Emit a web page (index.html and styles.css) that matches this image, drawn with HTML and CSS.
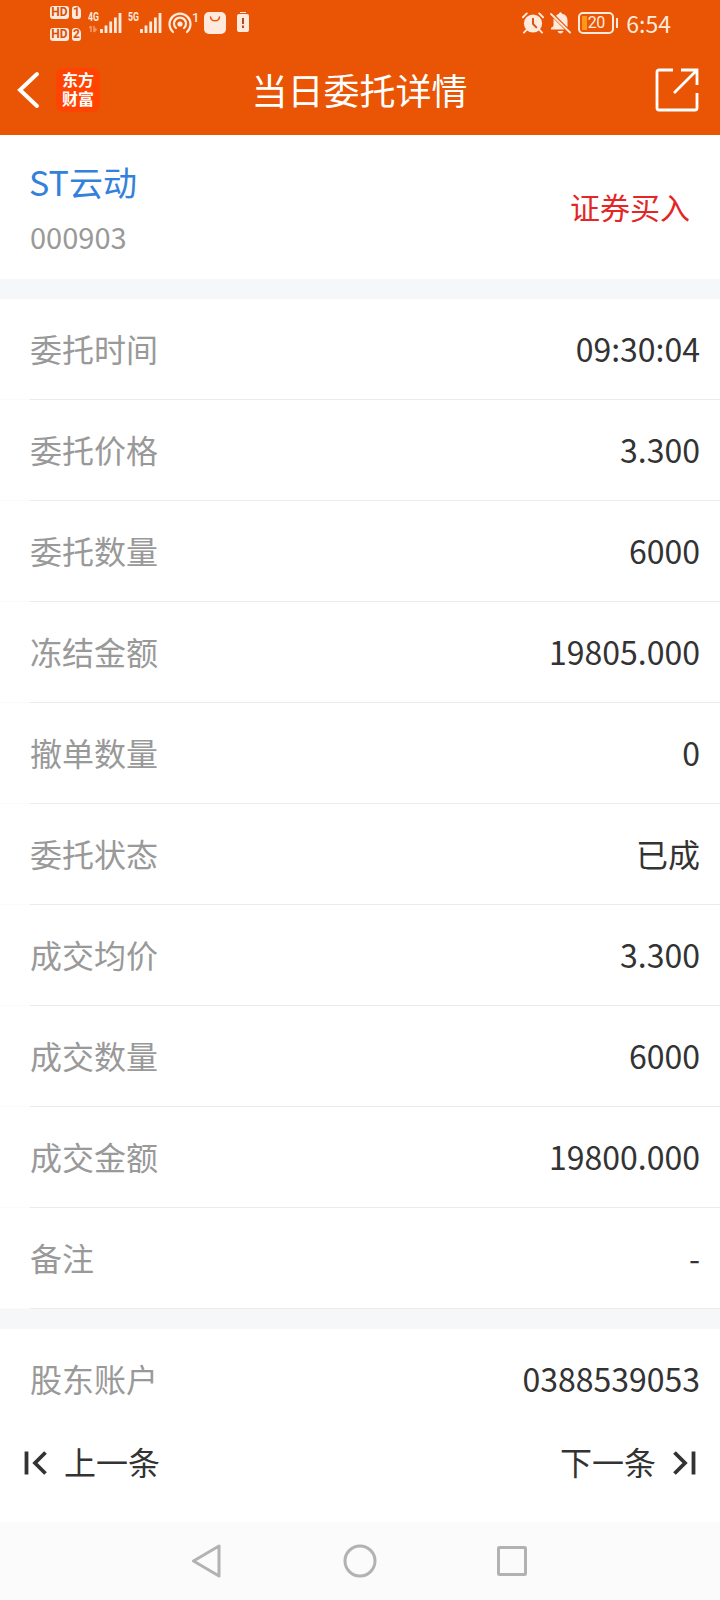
FILE: index.html
```html
<!DOCTYPE html>
<html lang="zh-CN">

<head>
	<meta charset="UTF-8">
	<meta name="viewport" content="width=device-width, initial-scale=1.0">

	<title>当日委托详情</title>

	<link rel="stylesheet" href="styles.css">
</head>

<body>
	<div class="status-bar">
		<div class="status-left">
			<div class="sims">
				<div class="sim"><span class="hd">HD</span><span class="num">1</span></div>
				<div class="sim"><span class="hd">HD</span><span class="num">2</span></div>
			</div>
			<div class="signal">
				<span class="net">4G</span>
				<svg width="34" height="22" viewBox="0 0 34 22">
					<path d="M3 14v6M1.500 16l1.500-2M6 14v6M6 20l2.500-2.500M6 17h2.500" stroke="#f79a68" stroke-width="1.500" fill="none" />
					<path d="M13.500 17v4M18 13.500v7.500M22.700 9.500v11.500M27.400 5.500v15.500M32 1v20" stroke="#ffeadd" stroke-width="2.800" />
				</svg>
			</div>
			<div class="signal">
				<span class="net">5G</span>
				<svg width="34" height="22" viewBox="0 0 34 22">
					<path d="M13.500 17v4M18 13.500v7.500M22.700 9.500v11.500M27.400 5.500v15.500M32 1v20" stroke="#ffeadd" stroke-width="2.800" />
				</svg>
			</div>
			<div class="hotspot">
				<svg width="24" height="22" viewBox="0 0 24 22">
					<g fill="none" stroke="#ffeadd" stroke-width="2.200" stroke-linecap="round">
						<path d="M5 20a10.500 10.500 0 1 1 14 0" />
						<path d="M8 16a6 6 0 1 1 8 0" />
					</g>
					<circle cx="12" cy="12" r="2.600" fill="#ffeadd" />
				</svg>
				<span class="count">1</span>
			</div>
			<svg class="bag" width="22" height="22" viewBox="0 0 22 22">
				<rect width="22" height="22" rx="5" fill="#ffeadd" />
				<path d="M6.500 5c.5 5 8.500 5 9 0" fill="none" stroke="#e95504" stroke-width="1.500" stroke-linecap="round" />
			</svg>
			<svg class="low" width="12" height="21" viewBox="0 0 12 21">
				<path d="M3 0h6v1h-6zM2 2h8a2 2 0 0 1 2 2v14a2 2 0 0 1-2 2h-8a2 2 0 0 1-2-2v-14a2 2 0 0 1 2-2z" fill="#ffeadd" />
				<path d="M6 6v6M6 13.500v2.500" stroke="#b64a10" stroke-width="2" />
			</svg>
		</div>
		<div class="status-right">
			<svg width="22" height="22" viewBox="0 0 23 22">
				<circle cx="11.500" cy="11.500" r="9.500" fill="#ffeadd" />
				<path d="M1 5l4-4M22 5l-4-4M5 18l-3 3M18 18l3 3" stroke="#ffeadd" stroke-width="2" stroke-linecap="round" />
				<path d="M11.500 6.500v5.500l3.500 3.500" fill="none" stroke="#d85008" stroke-width="2" stroke-linecap="round" />
			</svg>
			<svg class="mute" width="21" height="22" viewBox="0 0 21 22">
				<path d="M6 3.700q1.400-1.500 3-2a1.500 1.500 0 0 1 3 0q5.500 1 5.500 7v6.500zM3.500 6.500l11 11h-13.500v-1.500l2.500-2zM7.500 19h6q-1 2.500-3 2.500t-3-2.500z" fill="#ffeadd" />
				<path d="M1 2l19 18.500" stroke="#ffeadd" stroke-width="1.800" stroke-linecap="round" />
			</svg>
			<div class="battery"><span>20</span></div>
			<time class="clock">6:54</time>
		</div>
	</div>

	<header class="header">
		<div class="header-left">
			<svg width="24" height="38" viewBox="0 0 24 38">
				<path d="M20 3L3 19l17 16" fill="none" stroke="#fff" stroke-width="4" stroke-linecap="round" />
			</svg>
			<div class="logo">东方<br>财富</div>
		</div>
		<h1>当日委托详情</h1>
		<svg class="share" width="44" height="44" viewBox="0 0 44 44">
			<path d="M18 2H4a2 2 0 0 0-2 2v36a2 2 0 0 0 2 2h36a2 2 0 0 0 2-2V25M26 2h16v15M41 3L19 25" fill="none" stroke="#fff" stroke-width="2.800" />
		</svg>
	</header>

	<section class="stock">
		<div class="stock-info">
			<h2>ST云动</h2>
			<div class="code">000903</div>
		</div>
		<div class="action">证券买入</div>
	</section>

	<dl class="details">
		<div class="row"><dt>委托时间</dt><dd>09:30:04</dd></div>
		<div class="row"><dt>委托价格</dt><dd>3.300</dd></div>
		<div class="row"><dt>委托数量</dt><dd>6000</dd></div>
		<div class="row"><dt>冻结金额</dt><dd>19805.000</dd></div>
		<div class="row"><dt>撤单数量</dt><dd>0</dd></div>
		<div class="row"><dt>委托状态</dt><dd>已成</dd></div>
		<div class="row"><dt>成交均价</dt><dd>3.300</dd></div>
		<div class="row"><dt>成交数量</dt><dd>6000</dd></div>
		<div class="row"><dt>成交金额</dt><dd>19800.000</dd></div>
		<div class="row"><dt>备注</dt><dd>-</dd></div>
	</dl>

	<dl class="details account">
		<div class="row"><dt>股东账户</dt><dd>0388539053</dd></div>
	</dl>

	<div class="pager">
		<a class="page-link">
			<svg width="24" height="24" viewBox="0 0 24 24">
				<path d="M2.500 .5v23M21.500 1.500L11 12l10.500 10.500" fill="none" stroke="#333" stroke-width="3.800" />
			</svg>
			<span>上一条</span>
		</a>
		<a class="page-link">
			<span>下一条</span>
			<svg width="24" height="24" viewBox="0 0 24 24">
				<path d="M21.500 .5v23M2.500 1.500L13 12 2.500 22.500" fill="none" stroke="#333" stroke-width="3.800" />
			</svg>
		</a>
	</div>

	<nav class="nav-bar">
		<svg width="34" height="34" viewBox="0 0 34 34">
			<path d="M28 2v30L2.500 17z" />
		</svg>
		<svg width="34" height="34" viewBox="0 0 34 34">
			<circle cx="17" cy="17" r="15" />
		</svg>
		<svg width="34" height="34" viewBox="0 0 34 34">
			<rect x="3.500" y="3.500" width="27" height="27" rx="1" />
		</svg>
	</nav>
</body>

</html>
```
FILE: styles.css
```css
*,
*:before,
*:after {
	box-sizing: border-box;
}

body {
	margin: 0;
	height: 1600px;
	display: flex;
	flex-direction: column;

	font-family: "Noto Sans CJK SC", sans-serif;
	background-color: #fff;
	color: #333;
}

svg {
	display: block;
	flex: none;
}

h1,
h2,
dl,
dd {
	margin: 0;
}

.status-bar {
	flex: none;
	height: 45px;
	padding: 0 49px 0 50px;
	display: flex;
	justify-content: space-between;

	background-color: #e95504;
	color: #ffeadd;
}

.status-left,
.status-right {
	display: flex;
	align-items: center;
}

.sims {
	display: flex;
	flex-direction: column;
	gap: 9px;
	margin: 1px 7px 0 0;
}

.sim {
	display: flex;
	gap: 3px;
}

.sim span {
	height: 13px;
	border-radius: 3px;
	background-color: #ffeadd;
	color: #d85008;

	font: bold 12px/13px "Roboto", sans-serif;
	text-align: center;
}

.sim .hd {
	width: 19px;
}

.sim .num {
	width: 9px;
	border-top-right-radius: 5px;
}

.signal {
	display: grid;
	width: 34px;
	margin-right: 6px;
}

.signal svg,
.signal .net {
	grid-area: 1 / 1;
}

.signal .net {
	justify-self: start;
	transform: scaleX(.67);
	transform-origin: left;

	font: bold 13px/10px "Roboto", sans-serif;
}

.hotspot {
	display: flex;
	width: 31px;
}

.hotspot .count {
	font: 500 13px/11px "Roboto", sans-serif;
}

.bag {
	margin: 0 11px 0 5px;
}

.mute {
	margin: 0 7px 0 6px;
}

.battery {
	position: relative;
	width: 36px;
	height: 22px;
	margin-right: 12px;
	border: 2px solid #ffeadd;
	border-radius: 5px;
	background: linear-gradient(to right, #ff9818 5px, transparent 5px) 2px 2px / 30px 14px no-repeat;

	font: 16px/18px "Roboto", sans-serif;
	letter-spacing: -.5px;
	text-align: center;
}

.battery:after {
	content: "";
	position: absolute;
	top: 4px;
	right: -6px;
	width: 2px;
	height: 10px;
	background-color: #ffeadd;
}

.clock {
	font-size: 23px;
	line-height: 44px;
}

.header {
	flex: none;
	height: 90px;
	padding: 0 21px 0 17px;
	display: grid;
	grid-template-columns: 1fr auto 1fr;
	align-items: center;

	background-color: #e95504;
	color: #fff;
}

.header-left {
	display: flex;
	align-items: center;
	gap: 15px;
}

.logo {
	width: 44px;
	height: 44px;
	padding-top: 3px;
	border-radius: 8px;
	background-color: #ff4300;

	font-family: "Liberation Sans", "Noto Sans CJK SC", sans-serif;
	font-size: 16px;
	font-weight: 700;
	line-height: 19px;
	text-align: center;
}

.header h1 {
	padding: 0 0 2px 3px;

	font-size: 36px;
	font-weight: 400;
	line-height: 88px;
}

.share {
	justify-self: end;
}

.stock {
	flex: none;
	height: 144px;
	padding: 0 30px;
	display: flex;
	justify-content: space-between;
	align-items: center;
}

.stock-info {
	padding-top: 3px;
}

.stock h2 {
	margin-left: -1px;

	font-size: 34px;
	font-weight: 400;
	line-height: 54px;
	color: #3381da;
}

.stock .code {
	font-size: 29px;
	line-height: 54px;
	color: #999;
}

.stock .action {
	padding-bottom: 2px;

	font-size: 30px;
	color: #e32626;
}

.details {
	flex: none;
	border-top: 20px solid #f6f7f9;
}

.row {
	height: 101px;
	padding: 0 20px 3px 30px;
	display: flex;
	justify-content: space-between;
	align-items: center;

	font-size: 32px;
	background: linear-gradient(to right, #fafafb 30px, #ebebeb 30px) bottom / 100% 1px no-repeat;
}

.row dt {
	color: #999;
}

.account .row {
	background: none;
}

.pager {
	flex: 1;
	padding: 0 24px 27px 24px;
	display: flex;
	justify-content: space-between;
	align-items: center;

	font-size: 32px;
	line-height: 40px;
}

.page-link {
	display: flex;
	align-items: center;
	gap: 16px;
}

.page-link span {
	padding-bottom: 3px;
}

.nav-bar {
	flex: none;
	height: 78px;
	display: flex;
	justify-content: center;
	align-items: center;
	gap: 118px;

	background-color: #fbfbfb;
}

.nav-bar svg {
	fill: none;
	stroke: #b2b2b2;
	stroke-width: 3;
	stroke-linejoin: round;
}
```
